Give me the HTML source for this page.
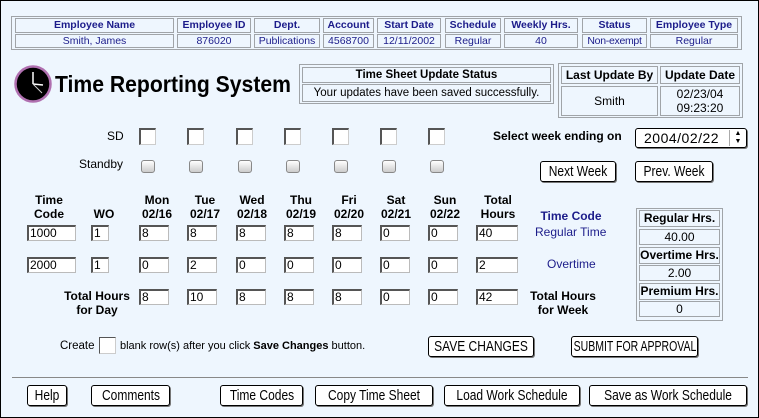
<!DOCTYPE html>
<html><head><meta charset="utf-8"><style>
*{box-sizing:border-box;margin:0;padding:0}
body{width:759px;height:418px;overflow:hidden;font-family:"Liberation Sans",Arial,sans-serif;background:#000}
#pg{position:absolute;left:1px;top:1px;width:757px;height:416px;background:#eef6fe}
.a{position:absolute}
.c{position:absolute;border:1px solid #a0a4a8;text-align:center;white-space:nowrap;overflow:hidden}
.tb{font-size:10.5px;color:#1c1c8a}
.tb.h{font-weight:bold}
.sd{position:absolute;width:17px;height:17px;background:#fff;border-top:2px solid #555;border-left:2px solid #555;border-right:1px solid #ccc;border-bottom:1px solid #ccc}
.sb{position:absolute;width:14px;height:13px;border:1px solid #888;border-radius:3px;background:linear-gradient(#fff,#ccc)}
.in{position:absolute;height:16px;background:#fff;border-top:2px solid #555;border-left:2px solid #555;border-right:1px solid #bbb;border-bottom:1px solid #bbb;font-size:12px;padding-left:1px;line-height:13px}
.btn{position:absolute;height:21px;background:#fff;border:1px solid #000;border-radius:3px;box-shadow:1px 1px 0 #777;font-size:15px;line-height:19px;white-space:nowrap}
.btn span{position:absolute;left:50%;margin-left:-120px;width:240px;text-align:center;top:0;transform:scaleX(.8)}
.hd{position:absolute;font-size:12px;font-weight:bold;text-align:center;line-height:14px;white-space:nowrap}
.lbl{position:absolute;font-size:12px;white-space:nowrap}
</style></head><body><div id="pg">
<div class="a" style="left:10px;top:15px;width:731px;height:34px;border:1px solid #a0a4a8"></div>
<div class="c tb h" style="left:14px;top:17px;width:159px;height:15px;line-height:13px">Employee Name</div>
<div class="c tb" style="left:14px;top:33px;width:159px;height:14px;line-height:12px">Smith, James</div>
<div class="c tb h" style="left:176px;top:17px;width:74px;height:15px;line-height:13px">Employee ID</div>
<div class="c tb" style="left:176px;top:33px;width:74px;height:14px;line-height:12px">876020</div>
<div class="c tb h" style="left:253px;top:17px;width:66px;height:15px;line-height:13px">Dept.</div>
<div class="c tb" style="left:253px;top:33px;width:66px;height:14px;line-height:12px">Publications</div>
<div class="c tb h" style="left:322px;top:17px;width:51px;height:15px;line-height:13px">Account</div>
<div class="c tb" style="left:322px;top:33px;width:51px;height:14px;line-height:12px">4568700</div>
<div class="c tb h" style="left:376px;top:17px;width:64px;height:15px;line-height:13px">Start Date</div>
<div class="c tb" style="left:376px;top:33px;width:64px;height:14px;line-height:12px">12/11/2002</div>
<div class="c tb h" style="left:444px;top:17px;width:56px;height:15px;line-height:13px">Schedule</div>
<div class="c tb" style="left:444px;top:33px;width:56px;height:14px;line-height:12px">Regular</div>
<div class="c tb h" style="left:503px;top:17px;width:74px;height:15px;line-height:13px">Weekly Hrs.</div>
<div class="c tb" style="left:503px;top:33px;width:74px;height:14px;line-height:12px">40</div>
<div class="c tb h" style="left:581px;top:17px;width:65px;height:15px;line-height:13px">Status</div>
<div class="c tb" style="left:581px;top:33px;width:65px;height:14px;line-height:12px;letter-spacing:-0.3px">Non-exempt</div>
<div class="c tb h" style="left:649px;top:17px;width:88px;height:15px;line-height:13px">Employee Type</div>
<div class="c tb" style="left:649px;top:33px;width:88px;height:14px;line-height:12px">Regular</div>

<svg class="a" style="left:13px;top:64px" width="38" height="38"><circle cx="19" cy="19" r="17.5" fill="#000" stroke="#b070b0" stroke-width="2.5"/><line x1="19" y1="19" x2="19" y2="7" stroke="#fff" stroke-width="1.5"/><line x1="19" y1="19" x2="29" y2="20" stroke="#fff" stroke-width="1.5"/><line x1="19" y1="19" x2="28" y2="28" stroke="#ccc" stroke-width="1"/></svg>
<div class="a" style="left:54px;top:68px;font-size:23px;font-weight:bold;line-height:30px;white-space:nowrap;transform:scaleX(.92);transform-origin:left">Time Reporting System</div>

<div class="a" style="left:298px;top:63px;width:255px;height:40px;border:1px solid #a0a4a8"></div>
<div class="c" style="left:301px;top:66px;width:249px;height:16px;font-size:11.5px;font-weight:bold;line-height:14px">Time Sheet Update Status</div>
<div class="c" style="left:301px;top:83px;width:249px;height:18px;font-size:11.5px;line-height:16px">Your updates have been saved successfully.</div>

<div class="a" style="left:557px;top:62px;width:185px;height:55px;border:1px solid #a0a4a8"></div>
<div class="c" style="left:560px;top:65px;width:97px;height:18px;font-size:12px;font-weight:bold;line-height:16px">Last Update By</div>
<div class="c" style="left:659px;top:65px;width:80px;height:18px;font-size:12px;font-weight:bold;line-height:16px">Update Date</div>
<div class="c" style="left:560px;top:85px;width:97px;height:30px;font-size:12px;line-height:28px">Smith</div>
<div class="c" style="left:659px;top:85px;width:80px;height:30px;font-size:12px;line-height:14px">02/23/04<br>09:23:20</div>

<div class="lbl" style="left:106px;top:128px">SD</div>
<div class="lbl" style="left:78px;top:156px">Standby</div>
<div class="sd" style="left:138px;top:127px"></div><div class="sd" style="left:186px;top:127px"></div><div class="sd" style="left:235px;top:127px"></div><div class="sd" style="left:283px;top:127px"></div><div class="sd" style="left:331px;top:127px"></div><div class="sd" style="left:379px;top:127px"></div><div class="sd" style="left:427px;top:127px"></div>
<div class="sb" style="left:140px;top:159px"></div><div class="sb" style="left:188px;top:159px"></div><div class="sb" style="left:237px;top:159px"></div><div class="sb" style="left:285px;top:159px"></div><div class="sb" style="left:333px;top:159px"></div><div class="sb" style="left:381px;top:159px"></div><div class="sb" style="left:429px;top:159px"></div>

<div class="lbl" style="left:492px;top:128px;font-weight:bold">Select week ending on</div>
<div class="a" style="left:634px;top:127px;width:112px;height:20px;background:#fff;border:1px solid #000;border-radius:3px;box-shadow:1px 1px 0 #777;font-size:14px;line-height:18px;padding-left:8px;letter-spacing:0.5px">2004/02/22<span style="position:absolute;right:0;top:1px;width:17px;height:16px;border-left:1px solid #aaa;font-size:7px;line-height:8px;text-align:center;letter-spacing:0">▲<br>▼</span></div>
<div class="btn" style="left:539px;top:160px;width:76px"><span>Next Week</span></div>
<div class="btn" style="left:634px;top:160px;width:78px"><span>Prev. Week</span></div>

<div class="hd" style="left:18px;top:192px;width:60px">Time<br>Code</div>
<div class="hd" style="left:88px;top:206px;width:30px">WO</div>
<div class="hd" style="left:136px;top:192px;width:40px">Mon<br>02/16</div>
<div class="hd" style="left:184px;top:192px;width:40px">Tue<br>02/17</div>
<div class="hd" style="left:231px;top:192px;width:40px">Wed<br>02/18</div>
<div class="hd" style="left:280px;top:192px;width:40px">Thu<br>02/19</div>
<div class="hd" style="left:328px;top:192px;width:40px">Fri<br>02/20</div>
<div class="hd" style="left:375px;top:192px;width:40px">Sat<br>02/21</div>
<div class="hd" style="left:424px;top:192px;width:40px">Sun<br>02/22</div>
<div class="hd" style="left:472px;top:192px;width:50px">Total<br>Hours</div>

<div class="in" style="left:26px;top:224px;width:49px">1000</div>
<div class="in" style="left:90px;top:224px;width:18px">1</div>
<div class="in" style="left:138px;top:224px;width:30px">8</div><div class="in" style="left:186px;top:224px;width:30px">8</div><div class="in" style="left:235px;top:224px;width:30px">8</div><div class="in" style="left:283px;top:224px;width:30px">8</div><div class="in" style="left:331px;top:224px;width:30px">8</div><div class="in" style="left:379px;top:224px;width:30px">0</div><div class="in" style="left:427px;top:224px;width:30px">0</div>
<div class="in" style="left:475px;top:224px;width:42px">40</div>

<div class="in" style="left:26px;top:256px;width:49px">2000</div>
<div class="in" style="left:90px;top:256px;width:18px">1</div>
<div class="in" style="left:138px;top:256px;width:30px">0</div><div class="in" style="left:186px;top:256px;width:30px">2</div><div class="in" style="left:235px;top:256px;width:30px">0</div><div class="in" style="left:283px;top:256px;width:30px">0</div><div class="in" style="left:331px;top:256px;width:30px">0</div><div class="in" style="left:379px;top:256px;width:30px">0</div><div class="in" style="left:427px;top:256px;width:30px">0</div>
<div class="in" style="left:475px;top:256px;width:42px">2</div>

<div class="hd" style="left:58px;top:288px;width:76px">Total Hours<br>for Day</div>
<div class="in" style="left:138px;top:288px;width:30px">8</div><div class="in" style="left:186px;top:288px;width:30px">10</div><div class="in" style="left:235px;top:288px;width:30px">8</div><div class="in" style="left:283px;top:288px;width:30px">8</div><div class="in" style="left:331px;top:288px;width:30px">8</div><div class="in" style="left:379px;top:288px;width:30px">0</div><div class="in" style="left:427px;top:288px;width:30px">0</div>
<div class="in" style="left:475px;top:288px;width:42px">42</div>

<div class="hd" style="left:530px;top:208px;width:80px;color:#1c1c8a">Time Code</div>
<div class="lbl" style="left:534px;top:224px;color:#1c1c8a">Regular Time</div>
<div class="lbl" style="left:546px;top:256px;color:#1c1c8a">Overtime</div>
<div class="hd" style="left:522px;top:288px;width:80px">Total Hours<br>for Week</div>

<div class="a" style="left:635px;top:207px;width:87px;height:113px;border:1px solid #a0a4a8"></div>
<div class="c" style="left:638px;top:209px;width:81px;height:17px;font-size:12px;font-weight:bold;line-height:15px">Regular Hrs.</div>
<div class="c" style="left:638px;top:228px;width:81px;height:16px;font-size:12px;line-height:14px">40.00</div>
<div class="c" style="left:638px;top:246px;width:81px;height:17px;font-size:12px;font-weight:bold;line-height:15px">Overtime Hrs.</div>
<div class="c" style="left:638px;top:264px;width:81px;height:16px;font-size:12px;line-height:14px">2.00</div>
<div class="c" style="left:638px;top:282px;width:81px;height:17px;font-size:12px;font-weight:bold;line-height:15px">Premium Hrs.</div>
<div class="c" style="left:638px;top:300px;width:81px;height:16px;font-size:12px;line-height:14px">0</div>

<div class="lbl" style="left:59px;top:339px;font-size:11.5px">Create</div>
<div class="a" style="left:98px;top:336px;width:17px;height:17px;background:#fff;border-top:1px solid #555;border-left:1px solid #555;border-right:1px solid #ccc;border-bottom:1px solid #ccc"></div>
<div class="lbl" style="left:119px;top:339px;font-size:11px">blank row(s) after you click <b>Save Changes</b> button.</div>
<div class="btn" style="left:427px;top:335px;width:106px"><span>SAVE CHANGES</span></div>
<div class="btn" style="left:570px;top:335px;width:127px"><span style="transform:scaleX(.7)">SUBMIT FOR APPROVAL</span></div>

<div class="a" style="left:11px;top:376px;width:736px;height:1px;background:#888"></div>

<div class="btn" style="left:26px;top:384px;width:40px"><span>Help</span></div>
<div class="btn" style="left:90px;top:384px;width:79px"><span>Comments</span></div>
<div class="btn" style="left:219px;top:384px;width:83px"><span>Time Codes</span></div>
<div class="btn" style="left:314px;top:384px;width:118px"><span>Copy Time Sheet</span></div>
<div class="btn" style="left:443px;top:384px;width:136px"><span>Load Work Schedule</span></div>
<div class="btn" style="left:588px;top:384px;width:158px"><span>Save as Work Schedule</span></div>
</div></body></html>
